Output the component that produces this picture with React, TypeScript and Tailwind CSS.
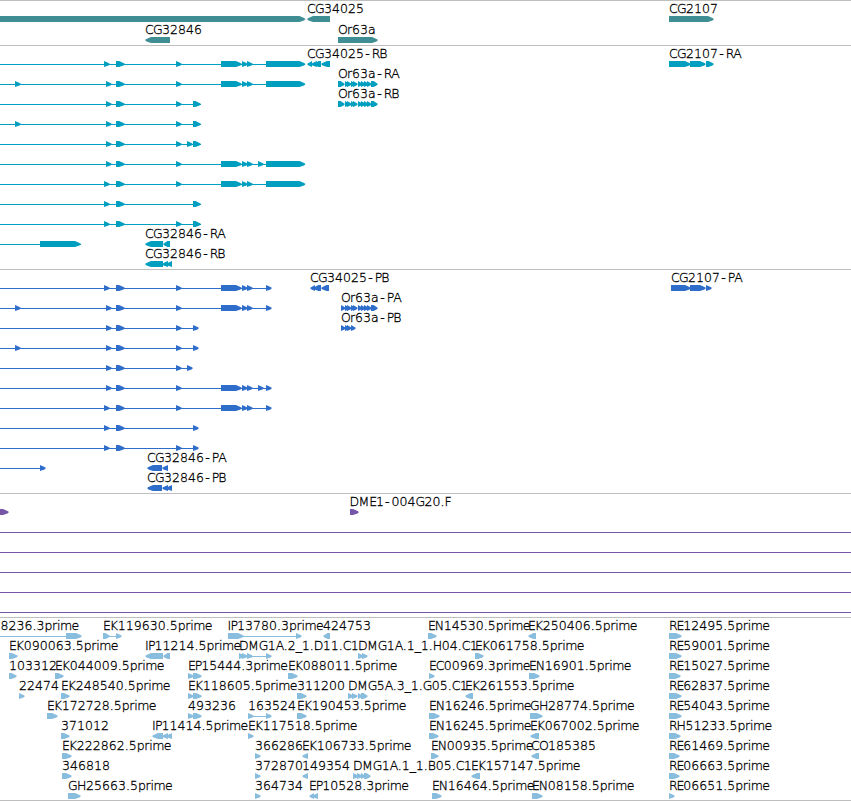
import React from 'react';

interface Feature {
    label?: string;
    at?: number;
    dir?: 'left' | 'right';
    line?: [number, number];
    blocks?: [number, number][];
}

interface Track {
    color: string;
    rowHeight: string;
    pad: string;
    rows: Feature[][];
}

// Horizontal advance of each glyph in a label, in pixels
const ADVANCES: Record<string, number> = {
    '.': 4, '-': 7.7, _: 6, I: 3, E: 6.7, P: 6.6, F: 7, C: 8, G: 9, H: 9, D: 9, M: 10.7, O: 9, N: 9,
    R: 7.6, r: 5, i: 3, m: 11.5, e: 7.5, p: 7.5, a: 8,
};

const glyphPositions = (text: string, start: number) => {
    let x = start;
    return text.split('').map((ch) => {
        // hyphens sit centred in their cell
        const current = ch === '-' ? x + 1.2 : x;
        x += ADVANCES[ch] ?? 8;
        return current;
    }).join(' ');
};

const blockPoints = (start: number, end: number, dir: 'left' | 'right') => {
    const width = end - start;
    const head = width < 7 ? width : Math.min(6, width - 2.5);
    if (dir === 'left') {
        return `${end},15 ${start + head},15 ${start + 1.5},17 ${start},18 ${start + 1.5},19.5 ${start + head},21 ${end},21`;
    }
    return `${start},15 ${end - head},15 ${end - 1.5},17 ${end},18 ${end - 1.5},19.5 ${end - head},21 ${start},21`;
};

const right = (label: string, at: number, ...blocks: [number, number][]): Feature => ({ label, at, blocks });
const left = (label: string, at: number, ...blocks: [number, number][]): Feature => ({ label, at, blocks, dir: 'left' });
const spliced = (end: number, ...blocks: [number, number][]): Feature => ({ line: [0, end], blocks });

const e15: [number, number] = [15, 21];
const e104: [number, number] = [104, 110];
const e106: [number, number] = [106, 112];
const e116: [number, number] = [116, 125];
const e176: [number, number] = [176, 182];
const e187: [number, number] = [187, 193];
const e193: [number, number] = [193, 201];
const p193: [number, number] = [193, 199];
const e258: [number, number] = [258, 264];
const e266: [number, number] = [266, 305.5];
const p266: [number, number] = [266, 272];
const mid: [number, number][] = [[221, 242], [242, 248], [247, 253]];
const or63a: [number, number][] = [
    [345, 350], [347, 352], [351, 356], [353, 358], [358, 363], [361, 366], [364, 369], [367, 372], [371, 378],
];
const reads188: [number, number][] = [[188, 194], [193, 202]];

const tracks: Track[] = [
    {
        color: '#3f8e94',
        rowHeight: 'h-[21px]',
        pad: 'pb-[2px]',
        rows: [
            [{ blocks: [[-10, 305.5]] }, left('CG34025', 307, [307, 330]), right('CG2107', 669, [669, 714])],
            [left('CG32846', 145, [145, 170]), right('Or63a', 338, [338, 378])],
        ],
    },
    {
        color: '#009fc0',
        rowHeight: 'h-5',
        pad: 'pb-[3px]',
        rows: [
            [
                spliced(305, e104, e116, e176, ...mid, e266),
                left('CG34025-RB', 307, [307, 312], [311, 317], [314, 321], [321, 330]),
                right('CG2107-RA', 669, [669, 691], [690, 706], [706, 714]),
            ],
            [
                spliced(305, e15, e106, e116, e176, ...mid, e266),
                right('Or63a-RA', 338, [338, 345], ...or63a),
            ],
            [
                spliced(201, e106, e116, e176, e193),
                right('Or63a-RB', 338, [338, 345], ...or63a),
            ],
            [spliced(201, e15, e106, e116, e176, e193)],
            [spliced(201, e106, e116, e176, e187, e193)],
            [spliced(305, e106, e116, e176, ...mid, e258, e266)],
            [spliced(305, e104, e116, e176, ...mid, e266)],
            [spliced(201, e104, e116, e193)],
            [spliced(201, e104, e116, e176, e193)],
            [spliced(81, [40, 81]), left('CG32846-RA', 145, [145, 163], [163, 170])],
            [left('CG32846-RB', 145, [145, 163], [162, 168], [166, 172])],
        ],
    },
    {
        color: '#2f6dcb',
        rowHeight: 'h-5',
        pad: 'pb-[3px]',
        rows: [
            [
                spliced(271, e104, e116, e176, ...mid, p266),
                left('CG34025-PB', 310, [310, 315], [313, 321], [321, 329]),
                right('CG2107-PA', 671, [671, 691], [690, 706], [706, 712]),
            ],
            [
                spliced(271, e15, e106, e116, e176, ...mid, p266),
                right('Or63a-PA', 341, [341, 346], ...or63a),
            ],
            [
                spliced(198, e106, e116, e176, p193),
                right('Or63a-PB', 341, [341, 346], [345, 350], [347, 352], [351, 356]),
            ],
            [spliced(198, e15, e106, e116, e176, p193)],
            [spliced(192, e106, e116, e176, e187)],
            [spliced(271, e106, e116, e176, ...mid, e258, p266)],
            [spliced(271, e104, e116, e176, ...mid, p266)],
            [spliced(198, e104, e116, p193)],
            [spliced(198, e104, e116, e176, p193)],
            [spliced(45, [40, 46]), left('CG32846-PA', 147, [147, 162], [162, 168])],
            [left('CG32846-PB', 147, [147, 162], [162, 168], [166, 172])],
        ],
    },
    {
        color: '#7656a6',
        rowHeight: 'h-5',
        pad: 'pb-[3px]',
        rows: [
            [{ blocks: [[-5, 9]] }, right('DME1-004G20.F', 349.5, [350, 359])],
            [spliced(851)],
            [spliced(851)],
            [spliced(851)],
            [spliced(851)],
            [spliced(851)],
        ],
    },
    {
        color: '#89bddd',
        rowHeight: 'h-5',
        pad: 'pb-[2px]',
        rows: [
            [
                { label: '8236.3prime', at: 0.5, line: [0, 66], blocks: [[66, 82]] },
                { label: 'EK119630.5prime', at: 103, line: [103, 121], blocks: [[103, 110], [116, 122]] },
                { label: 'IP13780.3prime', at: 227.5, line: [228, 300], blocks: [[228, 244], [296, 302]] },
                left('424753', 323, [323, 330]),
                right('EN14530.5prime', 428, [428, 437]),
                left('EK250406.5prime', 528, [528, 536]),
                right('RE12495.5prime', 669, [669, 682]),
            ],
            [
                right('EK090063.5prime', 9, [9, 18]),
                left('IP11214.5prime', 145, [145, 163], [163, 170]),
                { label: 'DMG1A.2_1.D11.C1', at: 239, line: [239, 270], blocks: [[239, 245], [242, 248], [247, 253], [266, 272]] },
                right('DMG1A.1_1.H04.C1', 358, [358, 364], [362, 368]),
                right('EK061758.5prime', 475, [475, 484]),
                right('RE59001.5prime', 669, [669, 682]),
            ],
            [
                right('103312', 9, [9, 17]),
                right('EK044009.5prime', 55, [55, 64]),
                right('EP15444.3prime', 188, ...reads188),
                right('EK088011.5prime', 288, [288, 298]),
                right('EC00969.3prime', 429, [429, 435]),
                right('EN16901.5prime', 529, [529, 540]),
                right('RE15027.5prime', 669, [669, 681]),
            ],
            [
                right('22474', 19, [19, 25]),
                right('EK248540.5prime', 61, [61, 70]),
                right('EK118605.5prime', 188, ...reads188),
                right('311200', 297, [297, 307]),
                right('DMG5A.3_1.G05.C1', 348, [348, 354], [352, 358], [358, 363], [361, 368]),
                left('EK261553.5prime', 465, [465, 473]),
                right('RE62837.5prime', 669, [669, 682]),
            ],
            [
                right('EK172728.5prime', 47, [47, 58]),
                right('493236', 188, ...reads188),
                { label: '163524', at: 248, line: [248, 270], blocks: [[248, 254], [266, 272]] },
                right('EK190453.5prime', 297, [297, 307]),
                right('EN16246.5prime', 429, [429, 440]),
                right('GH28774.5prime', 530, [530, 543]),
                right('RE54043.5prime', 669, [669, 682]),
            ],
            [
                right('371012', 61, [61, 70]),
                left('IP11414.5prime', 152, [152, 163], [162, 168], [166, 172]),
                right('EK117518.5prime', 248, [248, 254]),
                right('EN16245.5prime', 429, [429, 439]),
                left('EK067002.5prime', 530, [530, 539]),
                right('RH51233.5prime', 669, [669, 681]),
            ],
            [
                right('EK222862.5prime', 62, [62, 72]),
                right('366286', 255, [255, 261]),
                left('EK106733.5prime', 302, [302, 308]),
                right('EN00935.5prime', 431, [431, 439]),
                left('CO185385', 531, [531, 539]),
                right('RE61469.5prime', 669, [669, 680]),
            ],
            [
                right('346818', 62, [62, 72]),
                right('372870', 255, [255, 261]),
                left('149354', 302, [302, 308]),
                right('DMG1A.1_1.B05.C1', 353, [353, 359], [357, 363], [361, 366], [364, 371]),
                left('EK157147.5prime', 471, [471, 480]),
                right('RE06663.5prime', 669, [669, 680]),
            ],
            [
                right('GH25663.5prime', 68, [68, 81]),
                right('364734', 255, [255, 261]),
                left('EP10528.3prime', 309, [309, 314], [312, 318]),
                right('EN16464.5prime', 432, [432, 442]),
                right('EN08158.5prime', 532, [532, 543]),
                right('RE06651.5prime', 669, [669, 675]),
            ],
        ],
    },
];

const FeatureGlyph: React.FC<{ feature: Feature; color: string }> = ({ feature, color }) => (
    <g>
        {feature.line && (
            <rect x={feature.line[0]} y={18} width={feature.line[1] - feature.line[0]} height={1} fill={color} shapeRendering="crispEdges" />
        )}
        {feature.blocks?.map(([start, end], i) => (
            <polygon key={i} points={blockPoints(start, end, feature.dir ?? 'right')} fill={color} />
        ))}
        {feature.label && (
            <text x={glyphPositions(feature.label, feature.at ?? 0)} y={12} className="fill-black stroke-black stroke-[0.3px]">
                {feature.label}
            </text>
        )}
    </g>
);

const App: React.FC = () => (
    <main className="w-[851px] h-[801px] overflow-hidden bg-white border-b border-[#bebebe] font-['DejaVu_Sans',sans-serif] font-extralight text-[12.5px]">
        {tracks.map((track, t) => (
            <section key={t} className={`border-t border-[#bebebe] ${track.pad}`}>
                {track.rows.map((features, r) => (
                    <div key={r} className={track.rowHeight}>
                        <svg width="851" height="20" className="block overflow-visible">
                            {features.map((feature, i) => (
                                <FeatureGlyph key={i} feature={feature} color={track.color} />
                            ))}
                        </svg>
                    </div>
                ))}
            </section>
        ))}
    </main>
);

export default App;
